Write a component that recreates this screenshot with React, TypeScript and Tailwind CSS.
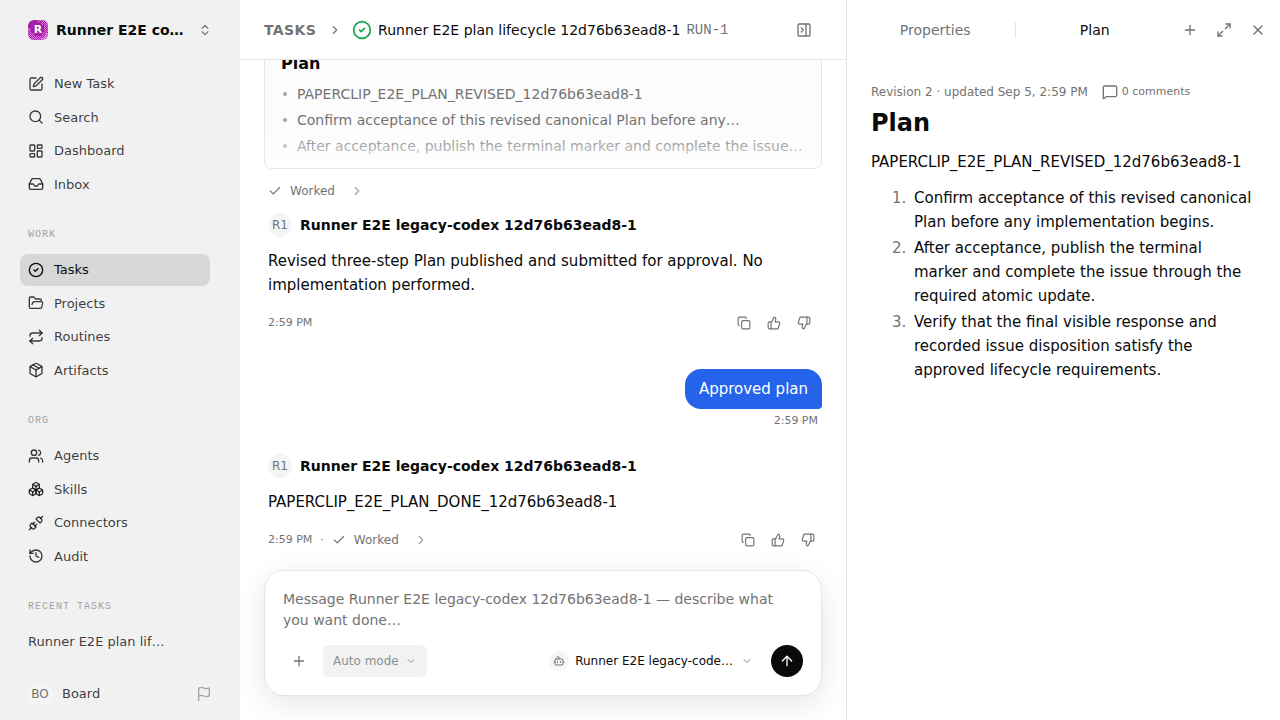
import React, { useState } from 'react';
import {
  ArrowUp,
  Bot,
  Boxes,
  Check,
  ChevronDown,
  ChevronRight,
  ChevronsUpDown,
  CircleCheck,
  Copy,
  Flag,
  FolderOpen,
  History,
  Inbox,
  LayoutDashboard,
  Maximize2,
  MessageSquare,
  Package,
  PanelRightClose,
  Plus,
  Repeat,
  Search,
  SquarePen,
  ThumbsDown,
  ThumbsUp,
  Unplug,
  Users,
  X,
  type LucideIcon,
} from 'lucide-react';

type NavEntry = { label: string; icon: LucideIcon };

const MAIN_NAV: NavEntry[] = [
  { label: 'New Task', icon: SquarePen },
  { label: 'Search', icon: Search },
  { label: 'Dashboard', icon: LayoutDashboard },
  { label: 'Inbox', icon: Inbox },
];

const WORK_NAV: NavEntry[] = [
  { label: 'Tasks', icon: CircleCheck },
  { label: 'Projects', icon: FolderOpen },
  { label: 'Routines', icon: Repeat },
  { label: 'Artifacts', icon: Package },
];

const ORG_NAV: NavEntry[] = [
  { label: 'Agents', icon: Users },
  { label: 'Skills', icon: Boxes },
  { label: 'Connectors', icon: Unplug },
  { label: 'Audit', icon: History },
];

const CARD_ITEMS = [
  'PAPERCLIP_E2E_PLAN_REVISED_12d76b63ead8-1',
  'Confirm acceptance of this revised canonical Plan before any…',
  'After acceptance, publish the terminal marker and complete the issue…',
];

const PLAN_STEPS = [
  'Confirm acceptance of this revised canonical Plan before any implementation begins.',
  'After acceptance, publish the terminal marker and complete the issue through the required atomic update.',
  'Verify that the final visible response and recorded issue disposition satisfy the approved lifecycle requirements.',
];

const AGENT = 'Runner E2E legacy-codex 12d76b63ead8-1';

function CompanyLogo() {
  return (
    <span className="relative flex size-5 shrink-0 items-center justify-center overflow-hidden rounded-md bg-[#a61ea3]">
      <svg className="absolute inset-0 size-5" viewBox="0 0 20 20" shapeRendering="crispEdges" aria-hidden="true">
        <defs>
          <pattern id="dither" width="2" height="2" patternUnits="userSpaceOnUse">
            <rect width="1" height="1" fill="#dd78dc" />
            <rect x="1" y="1" width="1" height="1" fill="#dd78dc" />
          </pattern>
        </defs>
        <path d="M0 8h3v5h3v3h8v-3h2V5h-3V2H9V0h11v20H0z" fill="url(#dither)" />
        <path d="M20 13v7h-7v-2h3v-2h2v-3z" fill="#dd78dc" />
      </svg>
      <span className="relative text-[11px] leading-4 font-bold text-white">R</span>
    </span>
  );
}

function NavGroup({ title, items, active, onSelect }: {
  title?: string;
  items: NavEntry[];
  active: string;
  onSelect: (label: string) => void;
}) {
  return (
    <div>
      {title && <SectionLabel>{title}</SectionLabel>}
      <div className="flex flex-col gap-0.5">
        {items.map(({ label, icon: Icon }) => (
          <a
            key={label}
            href="#"
            onClick={() => onSelect(label)}
            className={`flex items-center gap-2.5 rounded-lg px-2 py-1.5 ${active === label ? 'bg-[#d7d7d7] text-[#0a0a0a]' : 'text-[#0a0a0a]/80 hover:bg-black/5'}`}
          >
            <Icon size={16} />
            {label}
          </a>
        ))}
      </div>
    </div>
  );
}

function SectionLabel({ children }: { children: React.ReactNode }) {
  return (
    <h2 className="mt-[25px] mb-[9px] px-2 font-['Liberation_Mono',monospace] text-[10px] leading-5 tracking-widest text-[#a3a3a3] uppercase">
      {children}
    </h2>
  );
}

function Sidebar() {
  const [active, setActive] = useState('Tasks');

  return (
    <aside className="flex w-60 shrink-0 flex-col bg-[#f1f1f1] pr-7 pl-5 text-[13px] leading-normal">
      <button className="flex h-15 shrink-0 items-center gap-2 pl-2 text-left">
        <CompanyLogo />
        <span className="min-w-0 flex-1 truncate text-sm font-bold">Runner E2E co…</span>
        <ChevronsUpDown size={14} className="shrink-0 text-[#737373]" />
      </button>
      <nav className="flex-1 pt-2 pr-0.5">
        <NavGroup items={MAIN_NAV} active={active} onSelect={setActive} />
        <NavGroup title="Work" items={WORK_NAV} active={active} onSelect={setActive} />
        <NavGroup title="Org" items={ORG_NAV} active={active} onSelect={setActive} />
        <SectionLabel>Recent Tasks</SectionLabel>
        <a href="#" className="block px-2 py-1.5 text-[#0a0a0a]/80">Runner E2E plan lif…</a>
      </nav>
      <div className="flex items-center justify-between pb-3.5 pl-2">
        <button className="flex items-center gap-2.5 text-[#0a0a0a]/80">
          <span className="flex size-6 items-center justify-center rounded-full bg-[#f5f5f5] text-xs text-[#737373]">BO</span>
          Board
        </button>
        <button aria-label="Report an issue" className="text-[#a3a3a3]">
          <Flag size={16} />
        </button>
      </div>
    </aside>
  );
}

function AgentName() {
  return (
    <div className="flex items-center gap-2 px-1">
      <span className="flex size-6 items-center justify-center rounded-full bg-[#f5f5f5] text-xs text-[#737373]">R1</span>
      <span className="text-sm leading-6 font-bold">{AGENT}</span>
    </div>
  );
}

function Worked() {
  return (
    <button className="flex items-center text-xs text-[#737373]">
      <Check size={14} />
      <span className="ml-2">Worked</span>
      <ChevronRight size={14} className="ml-[15px] text-[#a3a3a3]" />
    </button>
  );
}

function MessageActions() {
  return (
    <div className="ml-auto flex gap-0.5 text-[#737373]">
      <button aria-label="Copy message" className="flex size-7 items-center justify-center"><Copy size={14} /></button>
      <button aria-label="Helpful" className="flex size-7 items-center justify-center"><ThumbsUp size={14} /></button>
      <button aria-label="Not helpful" className="flex size-7 items-center justify-center"><ThumbsDown size={14} /></button>
    </div>
  );
}

function PlanCard() {
  return (
    <div className="relative shrink-0 overflow-hidden rounded-lg border border-[#e5e5e5] bg-[#fcfcfc] px-4 pt-4 pb-[11px]">
      <h3 className="mb-[7px] text-base leading-6 font-bold">Plan</h3>
      <ul className="flex flex-col gap-1 text-sm leading-[22px] text-[#737373]">
        {CARD_ITEMS.map(item => (
          <li key={item} className="flex items-center gap-2.5 pl-0.5">
            <span className="size-1 shrink-0 rounded-full bg-[#a3a3a3]" />
            <span className="truncate">{item}</span>
          </li>
        ))}
      </ul>
      <div className="absolute inset-x-0 bottom-0 h-9 bg-linear-to-t from-white to-transparent" />
    </div>
  );
}

function Thread() {
  return (
    <div className="flex min-h-0 flex-1 flex-col justify-end overflow-hidden px-6 pb-4">
      <PlanCard />
      <div className="my-3.5 px-1"><Worked /></div>

      <AgentName />
      <p className="my-3 px-1 text-[15px] leading-6">
        Revised three-step Plan published and submitted for approval. No implementation performed.
      </p>
      <div className="flex items-center px-1 text-[11px] text-[#737373]">
        <span>2:59 PM</span>
        <MessageActions />
      </div>

      <div className="mt-8 mb-[25px] flex flex-col items-end">
        <div className="rounded-2xl rounded-br-sm bg-[#2563eb] px-3.5 py-2 text-[15px] leading-6 text-white">Approved plan</div>
        <span className="mt-1 px-1 text-[11px] leading-4 text-[#737373]">2:59 PM</span>
      </div>

      <AgentName />
      <p className="my-3 px-1 text-[15px] leading-6">PAPERCLIP_E2E_PLAN_DONE_12d76b63ead8-1</p>
      <div className="flex items-center gap-2 pl-1 text-[11px] text-[#737373]">
        <span>2:59 PM</span>
        <span>·</span>
        <Worked />
        <MessageActions />
      </div>
    </div>
  );
}

function Composer() {
  const [message, setMessage] = useState('');

  return (
    <div className="px-6 pb-6">
      <div className="flex flex-col gap-3.5 rounded-[20px] border border-[#e5e5e5] bg-white p-[18px] shadow-[0_8px_30px_rgba(0,0,0,0.1)]">
        <textarea
          rows={2}
          aria-label="Message"
          value={message}
          onChange={e => setMessage(e.target.value)}
          placeholder={`Message ${AGENT} — describe what you want done…`}
          className="block w-full resize-none text-sm leading-[21px] outline-none placeholder:text-[#737373]"
        />
        <div className="flex items-center">
          <button aria-label="Add attachment" className="flex size-8 items-center justify-center text-[#737373]"><Plus size={16} /></button>
          <button className="ml-2 flex h-8 items-center gap-1.5 rounded-md bg-[#f1f3f3] px-2.5 text-xs font-medium text-[#8c8f8f]">
            Auto mode
            <ChevronDown size={12} />
          </button>
          <button className="ml-auto flex items-center gap-1.5 text-xs">
            <span className="flex size-5 items-center justify-center rounded-full bg-[#f5f5f5] text-[#737373]"><Bot size={12} /></span>
            Runner E2E legacy-code…
            <ChevronDown size={12} className="ml-0.5 text-[#8c8c8c]" />
          </button>
          <button aria-label="Send" className="ml-[18px] flex size-8 items-center justify-center rounded-full bg-[#0a0a0a] text-white">
            <ArrowUp size={16} />
          </button>
        </div>
      </div>
    </div>
  );
}

function PlanPanel() {
  return (
    <aside className="flex w-[434px] shrink-0 flex-col border-l border-[#e5e5e5]">
      <div className="flex h-15 shrink-0 items-center pr-1.5 pl-[9px] text-[#737373]">
        <button className="h-8 flex-1 text-sm">Properties</button>
        <span className="h-4 w-px bg-[#e5e5e5]" />
        <button className="h-8 flex-1 text-sm text-[#0a0a0a]">Plan</button>
        <div className="flex gap-0.5">
          <button aria-label="Open tab" className="flex size-8 items-center justify-center"><Plus size={16} /></button>
          <button aria-label="Expand panel" className="flex size-8 items-center justify-center"><Maximize2 size={16} /></button>
          <button aria-label="Close panel" className="flex size-8 items-center justify-center"><X size={16} /></button>
        </div>
      </div>
      <div className="px-6 pt-6">
        <div className="flex items-center gap-3.5 text-xs text-[#737373]">
          <span>Revision 2 · updated Sep 5, 2:59 PM</span>
          <button className="flex items-center gap-1 text-[11px] leading-4">
            <MessageSquare size={16} />
            0 comments
          </button>
        </div>
        <h1 className="mt-[7px] text-2xl font-bold">Plan</h1>
        <p className="mt-[11px] text-[15px] leading-6">PAPERCLIP_E2E_PLAN_REVISED_12d76b63ead8-1</p>
        <ol className="mt-3 flex list-decimal flex-col gap-0.5 pl-10 text-[15px] leading-6 marker:text-[#737373]">
          {PLAN_STEPS.map(step => <li key={step} className="pl-[3px]">{step}</li>)}
        </ol>
      </div>
    </aside>
  );
}

export default function App() {
  return (
    <div className="flex h-screen bg-white font-['DejaVu_Sans',sans-serif] text-[#0a0a0a]">
      <Sidebar />
      <main className="flex min-w-0 flex-1 flex-col">
        <header className="flex h-15 shrink-0 items-center border-b border-[#e5e5e5] px-6 text-sm">
          <nav className="flex min-w-0 items-center gap-2.5">
            <a href="#" className="font-semibold tracking-wide text-[#737373] uppercase">Tasks</a>
            <ChevronRight size={14} className="ml-0.5 text-[#737373]" />
            <span className="flex min-w-0 items-center gap-1.5">
              <CircleCheck size={20} className="shrink-0 text-[#16a34a]" />
              <span className="truncate">Runner E2E plan lifecycle 12d76b63ead8-1</span>
              <span className="font-['Liberation_Mono',monospace] text-[#737373]">RUN-1</span>
            </span>
          </nav>
          <button aria-label="Toggle side panel" className="mr-0.5 ml-auto flex size-8 items-center justify-center text-[#737373]">
            <PanelRightClose size={16} />
          </button>
        </header>
        <Thread />
        <Composer />
      </main>
      <PlanPanel />
    </div>
  );
}
